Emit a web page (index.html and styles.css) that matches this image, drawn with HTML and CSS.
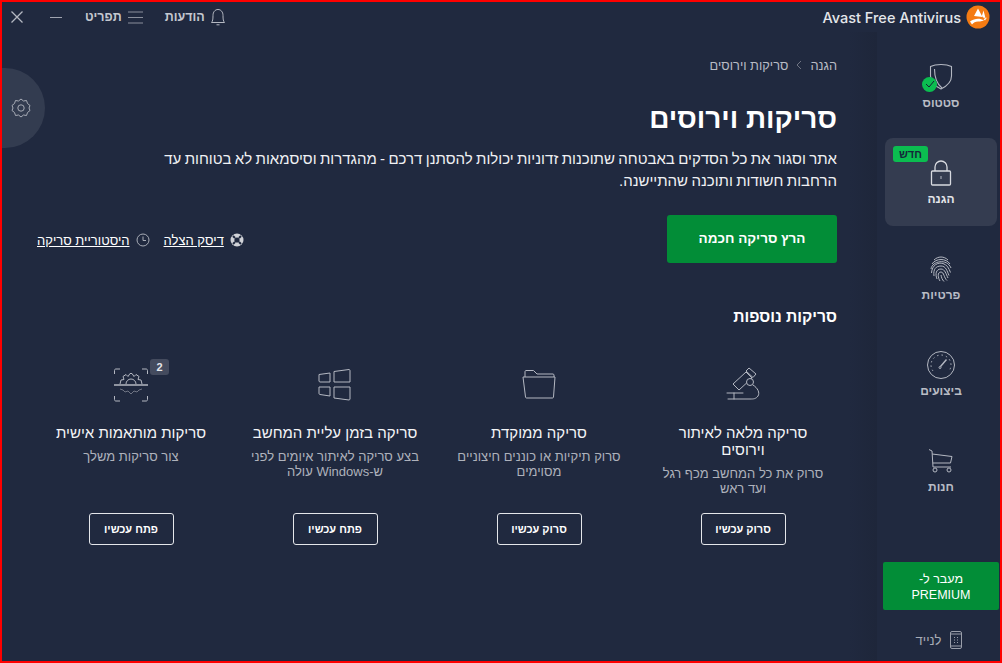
FILE: index.html
```html
<!DOCTYPE html>
<html lang="he" dir="rtl">
<head>
    <meta charset="UTF-8">
    <title>Avast Free Antivirus</title>
    <link rel="stylesheet" href="styles.css">
</head>
<body>
    <div class="window">
        <!-- Title bar -->
        <header class="topbar">
            <div class="brand">
                <svg class="logo" width="24" height="24" viewBox="0 0 24 24"><circle cx="12" cy="12" r="11.500" fill="#f47b13"/><path d="M8 11 12 3.500 16.500 12zM17.500 5.500 19.500 13l-2.500-.5-1-2zM21 12.500 19 15.500 17.500 14zM4 16.500C9 13 14 13 18 15.500L14 16.500C10 16 8 17 6 19.500z" fill="#fff"/></svg>
                <span class="brand-name" dir="ltr">Avast Free Antivirus</span>
            </div>
            <div class="controls">
                <a class="ctl ctl-bell">
                    <svg width="16" height="18" viewBox="0 0 16 18" fill="none" stroke="#b4b8c2"><path d="M1.500 14.500h13c-1.200-1.500-1.500-3-1.500-7C13 4 11 1.500 8 1.500S3 4 3 7.500c0 4-.3 5.500-1.500 7zM6.500 16.800h3"/></svg>
                    הודעות
                </a>
                <a class="ctl ctl-menu">
                    <svg width="15" height="13" viewBox="0 0 15 13" stroke="#8a8f9c"><path d="M0 1h15M0 6.500h15M0 12h15"/></svg>
                    תפריט
                </a>
                <span class="min"></span>
                <svg class="close" width="12" height="12" viewBox="0 0 12 12" stroke="#b4b8c2" stroke-width="1.300"><path d="M.5.500l11 11M11.500.500l-11 11"/></svg>
            </div>
        </header>

        <div class="columns">
            <!-- Side navigation -->
            <nav class="sidebar">
                <a class="nav-item">
                    <span class="nav-icon">
                        <svg width="24" height="27" viewBox="0 0 24 27" fill="none" stroke="#b4b8c2" stroke-width="1.100"><path d="M12 1.500C8 1.500 4.500 2 1.500 3.500V13C1.500 19 7 23.500 12 26 17 23.500 22.500 19 22.500 13V3.500C19.500 2 16 1.500 12 1.500z"/><path d="M5.500 6C5.500 14 8 21 13 25"/></svg>
                        <span class="check"><svg width="10" height="8" viewBox="0 0 10 8" fill="none" stroke="#123" stroke-width="1"><path d="M1 4l3 3 5-6"/></svg></span>
                    </span>
                    סטטוס
                </a>
                <a class="nav-item active">
                    <span class="tag">חדש</span>
                    <span class="nav-icon">
                        <svg width="22" height="26" viewBox="0 0 22 26" fill="none" stroke="#d8dae0" stroke-width="1.300"><rect x="1.500" y="11" width="19" height="14" rx="1"/><path d="M5 11V7a6 6 0 0 1 12 0v4"/><path d="M11 16v3" stroke-width="1.500" stroke="#8a8f9c"/></svg>
                    </span>
                    הגנה
                </a>
                <a class="nav-item">
                    <span class="nav-icon">
                        <svg width="22" height="28" viewBox="0 0 22 28" fill="none" stroke="#b4b8c2" stroke-width="1"><path d="M4 5c4-4 10-4 14 0M2 9c4-6 14-6 18 0M1 14c1-8 16-11 20-1M1.500 18C2 10 8 7 13 8.500c4 1.200 6 5 7.500 9M4 21c-1-7 2-10 7-10 5 0 6 5 8 9.500M7 24c-2-5-1-10 4-10 4 0 5 5 7 9M10 26c-2-3-3-9 1-9 3 0 3 6 6 8.500M14 26.500c-2-2-2.500-4-3-6.500"/></svg>
                    </span>
                    פרטיות
                </a>
                <a class="nav-item">
                    <span class="nav-icon">
                        <svg width="28" height="28" viewBox="0 0 28 28" fill="none" stroke="#b4b8c2"><circle cx="14" cy="14" r="13.500"/><path d="M6 20a10 10 0 1 1 16 0" stroke-dasharray="1.500 3"/><path d="M19.500 8.500l-6 7" stroke-width="1.400"/><circle cx="13" cy="16.500" r="1"/></svg>
                    </span>
                    ביצועים
                </a>
                <a class="nav-item">
                    <span class="nav-icon">
                        <svg width="24" height="24" viewBox="0 0 24 24" fill="none" stroke="#b4b8c2"><path d="M0 .5l3 1.500 1 16h18M3.200 5L23 7.500 21.500 14H3.800"/><circle cx="6" cy="21" r="2"/><circle cx="20" cy="21" r="2"/></svg>
                    </span>
                    חנות
                </a>
                <a class="premium">מעבר ל-<br>PREMIUM</a>
                <a class="mobile">
                    <svg width="12" height="18" viewBox="0 0 12 18" fill="none" stroke="#9a9eaa"><rect x=".5" y=".5" width="11" height="17" rx="1.500"/><path d="M.5 3h11M.5 15h11M4 6.500h1M7 6.500h1M4 9h1M7 9h1M4 11.500h1M7 11.500h1"/></svg>
                    לנייד
                </a>
            </nav>

            <!-- Page content -->
            <main class="content">
                <div class="crumbs">
                    <span>הגנה</span>
                    <svg width="6" height="10" viewBox="0 0 6 10" fill="none" stroke="#6f7483"><path d="M5 1 1 5l4 4"/></svg>
                    <span>סריקות וירוסים</span>
                </div>
                <h1>סריקות וירוסים</h1>
                <p class="intro">אתר וסגור את כל הסדקים באבטחה שתוכנות זדוניות יכולות להסתנן דרכם - מהגדרות וסיסמאות לא בטוחות עד הרחבות חשודות ותוכנה שהתיישנה.</p>

                <div class="actions">
                    <a class="run-btn">הרץ סריקה חכמה</a>
                    <div class="links">
                        <a class="link">
                            <svg width="14" height="14" viewBox="0 0 14 14"><circle cx="7" cy="7" r="6.500" fill="#d0d2d8"/><circle cx="7" cy="7" r="2.600" fill="#20293f"/><path d="M3 3l2 2M11 3 9 5M3 11l2-2M11 11 9 9" stroke="#20293f" stroke-width="2"/></svg>
                            <u>דיסק הצלה</u>
                        </a>
                        <a class="link">
                            <svg width="14" height="14" viewBox="0 0 14 14" fill="none" stroke="#a8acb6"><circle cx="7" cy="7" r="6"/><path d="M7 3.500V7.500h3"/></svg>
                            <u>היסטוריית סריקה</u>
                        </a>
                    </div>
                </div>

                <h2>סריקות נוספות</h2>

                <div class="cards">
                    <section class="card">
                        <svg class="card-icon" width="36" height="36" viewBox="0 0 36 36" fill="none" stroke="#b4b8c2"><path d="M28 18c5 3 7 8 5 11-2 3-5 3-7 3H3M2 26h16M9 26v6" stroke-linecap="round"/><path d="M8 17 21 5l6 6-13 12z"/><path d="M21 4l3-3 7 6-3 3.500z"/><circle cx="25" cy="15" r="3.500" fill="#20293f"/></svg>
                        <h3>סריקה מלאה לאיתור וירוסים</h3>
                        <p>סרוק את כל המחשב מכף רגל ועד ראש</p>
                        <a class="card-btn">סרוק עכשיו</a>
                    </section>
                    <section class="card">
                        <svg class="card-icon" width="36" height="36" viewBox="0 0 36 36" fill="none" stroke="#b4b8c2"><path d="M4 10V4.500c0-.5.500-1 1-1h7.500l3.500 3.500h16c.5 0 1 .5 1 1V10"/><path d="M2 10h32l-1.500 20c0 .5-.5 1-1 1h-26c-.5 0-1-.5-1-1z"/></svg>
                        <h3>סריקה ממוקדת</h3>
                        <p>סרוק תיקיות או כוננים חיצוניים מסוימים</p>
                        <a class="card-btn">סרוק עכשיו</a>
                    </section>
                    <section class="card">
                        <svg class="card-icon" width="36" height="36" viewBox="0 0 36 36" fill="none" stroke="#b4b8c2"><path d="M17 4.500 32 2.500c.5 0 1 .5 1 1V15H17zM2 7.500 13 6v9H3c-.5 0-1-.5-1-1zM17 20h16v12c0 .5-.5 1-1 1L17 31zM2 20h11v9L3 27.500c-.5 0-1-.5-1-1z"/></svg>
                        <h3>סריקה בזמן עליית המחשב</h3>
                        <p>בצע סריקה לאיתור איומים לפני ש-Windows עולה</p>
                        <a class="card-btn">פתח עכשיו</a>
                    </section>
                    <section class="card">
                        <span class="icon-wrap">
                            <svg class="card-icon" width="36" height="36" viewBox="0 0 36 36" fill="none" stroke="#b4b8c2"><path d="M7 2H3c-1 0-1.500.500-1.500 1.500V7M29 2h4c1 0 1.500.500 1.500 1.500V7M7 34H3c-1 0-1.500-.500-1.500-1.500V29M29 34h4c1 0 1.500-.500 1.500-1.500V29"/><path d="M1 18h34" stroke-width="1.400"/><path d="M7 17l1-4 3-.5-1-3 3-2 2 2 2-3h2l2 3 2-2 3 2-1 3 3 .5 1 4M13 17a5 5 0 0 1 10 0"/><path d="M7 22l3 1 2 2 3-1 3 3 3-3 3 1 2-2 3-1" stroke="#6f7483"/></svg>
                            <span class="count">2</span>
                        </span>
                        <h3>סריקות מותאמות אישית</h3>
                        <p>צור סריקות משלך</p>
                        <a class="card-btn">פתח עכשיו</a>
                    </section>
                </div>

                <a class="gear">
                    <svg width="20" height="20" viewBox="0 0 20 20" fill="none" stroke="#a8acb6"><path d="M10 1l2.500 2 3-.5 1 3L19 7.500 18 10l1 2.500-2.500 2-1 3-3-.5L10 19l-2.500-2-3 .5-1-3L1 12.500 2 10 1 7.500l2.500-2 1-3 3 .5z"/><circle cx="10" cy="10" r="3.200"/></svg>
                </a>
            </main>
        </div>
    </div>
</body>
</html>
```

FILE: styles.css
```css
/* General layout */
* {
    box-sizing: border-box;
}
html, body {
    margin: 0;
    height: 100%;
}
body {
    font-family: "Liberation Sans", Arial, sans-serif;
    color: #fff;
    background: #20293f;
}
a {
    cursor: pointer;
}
.window {
    position: relative;
    width: 1002px;
    height: 663px;
    border: 2px solid #f00;
    background: #20293f;
    overflow: hidden;
    display: flex;
    flex-direction: column;
}

/* Title bar */
.topbar {
    height: 30px;
    flex: none;
    display: flex;
    justify-content: space-between;
    align-items: center;
    padding: 0 10px 0 9px;
}
.brand {
    display: flex;
    align-items: center;
    gap: 5px;
}
.brand-name {
    font-family: Inter, sans-serif;
    font-size: 14.500px;
    font-weight: 500;
    color: #e4e6ea;
}
.controls {
    display: flex;
    align-items: center;
    font-size: 12.500px;
    font-weight: bold;
    color: #c4c7cf;
}
.ctl {
    display: flex;
    align-items: center;
    gap: 5px;
}
.ctl-menu {
    margin-right: 22px;
    gap: 6px;
}
.min {
    width: 12px;
    height: 1px;
    background: #a0a4b0;
    margin-right: 23px;
}
.close {
    margin-right: 27px;
}
.logo {
    flex: none;
}

.columns {
    flex: 1;
    display: flex;
    min-height: 0;
}

/* Side navigation */
.sidebar {
    width: 123px;
    flex: none;
    padding: 10px 3px 0 8px;
    display: flex;
    flex-direction: column;
    align-items: center;
}
.nav-item {
    position: relative;
    width: 112px;
    height: 88px;
    margin-bottom: 8px;
    border-radius: 8px;
    display: flex;
    flex-direction: column;
    align-items: center;
    justify-content: center;
    gap: 5px;
    font-size: 12px;
    font-weight: bold;
    color: #b9bcc5;
}
.nav-item.active {
    background: #343c50;
    color: #e4e6ea;
}
.nav-icon {
    position: relative;
    height: 28px;
    display: flex;
    align-items: center;
    justify-content: center;
}
.check {
    position: absolute;
    left: -7px;
    bottom: -1px;
    width: 15px;
    height: 15px;
    border-radius: 50%;
    background: #0bbd50;
    display: flex;
    align-items: center;
    justify-content: center;
}
.tag {
    position: absolute;
    top: 8px;
    left: 8px;
    width: 35px;
    height: 16px;
    border-radius: 3px;
    background: #0bbd50;
    color: #14283a;
    font-size: 11px;
    line-height: 16px;
    text-align: center;
}
.premium {
    width: 116px;
    height: 48px;
    margin-top: 40px;
    border-radius: 2px;
    background: #028d37;
    color: #fff;
    font-size: 12.500px;
    line-height: 16px;
    text-align: center;
    padding-top: 9px;
}
.mobile {
    margin-top: 21px;
    margin-right: 4px;
    display: flex;
    align-items: center;
    gap: 9px;
    font-size: 13px;
    color: #a8acb6;
}

/* Page content */
.content {
    flex: 1;
    padding: 25px 40px 0 35px;
    background: linear-gradient(to left, #1e263a 0, #20293f 28px);
}
.crumbs {
    display: flex;
    align-items: center;
    gap: 8px;
    font-size: 12.800px;
    color: #b9bcc5;
    height: 16px;
}
h1 {
    margin: 28px 0 0;
    font-size: 28px;
    line-height: 36px;
    font-weight: bold;
}
.intro {
    margin: 11px 0 0;
    max-width: 700px;
    font-size: 15px;
    line-height: 22px;
    word-spacing: -0.8px;
    color: #f0f1f4;
}
.actions {
    display: flex;
    justify-content: space-between;
    align-items: center;
    margin-top: 23px;
}
.run-btn {
    width: 170px;
    height: 48px;
    border-radius: 3px;
    background: #028d37;
    color: #fff;
    font-size: 13.500px;
    font-weight: bold;
    line-height: 48px;
    text-align: center;
}
.links {
    display: flex;
    gap: 14px;
    padding-top: 2px;
}
.link {
    display: flex;
    align-items: center;
    gap: 6px;
    font-size: 13px;
    color: #fff;
}
h2 {
    margin: 44px 0 0;
    font-size: 15.700px;
    line-height: 20px;
    font-weight: bold;
}
.cards {
    display: grid;
    grid-template-columns: repeat(4, 204px);
    margin: 40px -8px 0;
    height: 178px;
}
.card {
    display: flex;
    flex-direction: column;
    align-items: center;
    text-align: center;
    padding: 0 16px;
}
.card-icon {
    display: block;
    flex: none;
}
.icon-wrap {
    position: relative;
}
.count {
    position: absolute;
    top: -8px;
    right: -20px;
    width: 19px;
    height: 16px;
    border-radius: 3px;
    background: #444b5e;
    font-size: 11px;
    font-weight: bold;
    line-height: 16px;
    text-align: center;
    color: #e4e6ea;
}
h3 {
    margin: 21px 0 0;
    font-size: 15px;
    line-height: 17px;
    font-weight: normal;
    color: #f4f5f7;
}
.card p {
    margin: 8px 0 0;
    font-size: 13px;
    line-height: 15px;
    color: #aeb2bc;
}
.card-btn {
    margin-top: auto;
    width: 85px;
    height: 32px;
    border: 1px solid #e4e6ea;
    border-radius: 3px;
    font-size: 11px;
    font-weight: bold;
    line-height: 30px;
    text-align: center;
}
.gear {
    position: absolute;
    left: -37px;
    top: 66px;
    width: 80px;
    height: 80px;
    border-radius: 50%;
    background: #333c50;
    display: flex;
    align-items: center;
    justify-content: center;
}
.gear svg {
    margin-left: 32px;
}
```
